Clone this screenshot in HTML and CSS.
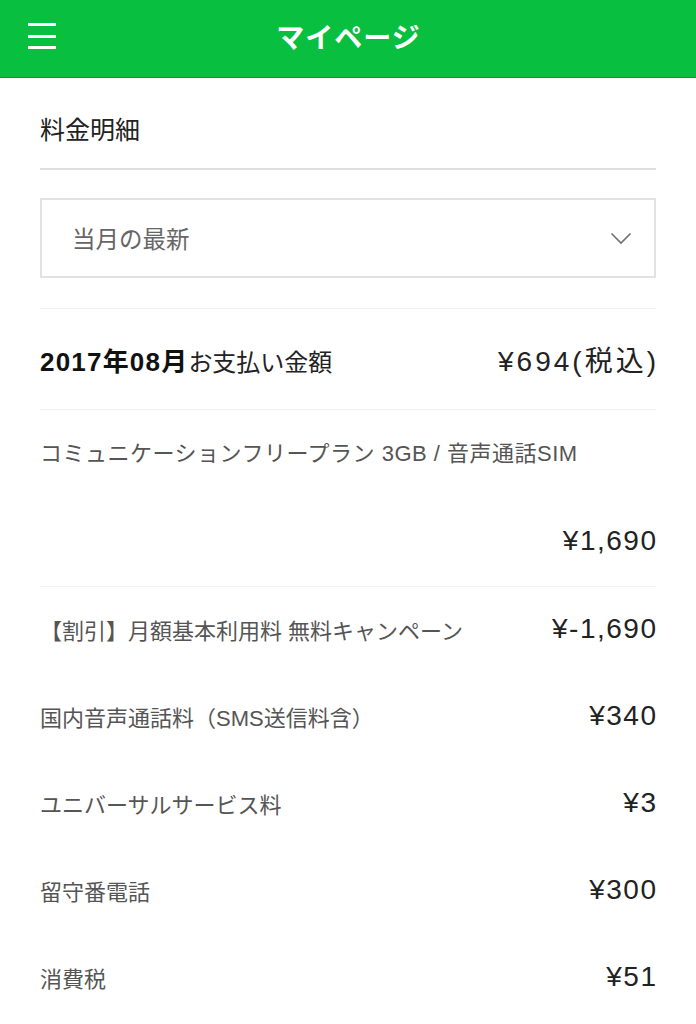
FILE: index.html
```html
<!DOCTYPE html>
<html lang="ja">
<head>
<meta charset="utf-8">
<title>マイページ</title>
<link rel="stylesheet" href="styles.css">
</head>
<body>
<header class="topbar">
  <div class="menu" aria-label="menu"><span></span><span></span><span></span></div>
  <h1 class="topbar-title">マイページ</h1>
  <div class="spacer"></div>
</header>
<main class="content">
  <h2 class="page-title">料金明細</h2>
  <div class="select">
    <span class="select-text">当月の最新</span>
    <svg class="chevron" width="22" height="13" viewBox="0 0 22 13"><polyline points="1.5,1.5 11,11 20.5,1.5" fill="none" stroke="#707070" stroke-width="1.6"/></svg>
  </div>
  <div class="total">
    <div class="total-label"><b>2017年08月</b><span>お支払い金額</span></div>
    <div class="total-amount">¥694(税込)</div>
  </div>
  <div class="plan">
    <div class="plan-name">コミュニケーションフリープラン 3GB / 音声通話SIM</div>
    <div class="amount plan-amount">¥1,690</div>
  </div>
  <ul class="items">
    <li class="item"><span class="label">【割引】月額基本利用料 無料キャンペーン</span><span class="amount">¥-1,690</span></li>
    <li class="item"><span class="label">国内音声通話料（SMS送信料含）</span><span class="amount">¥340</span></li>
    <li class="item"><span class="label">ユニバーサルサービス料</span><span class="amount">¥3</span></li>
    <li class="item"><span class="label">留守番電話</span><span class="amount">¥300</span></li>
    <li class="item"><span class="label">消費税</span><span class="amount">¥51</span></li>
  </ul>
</main>
</body>
</html>
```
FILE: styles.css
```css
* { box-sizing: border-box; }
html, body { margin: 0; padding: 0; background: #fff; }
body {
  font-family: "Liberation Sans", "Noto Sans CJK JP", sans-serif;
  color: #222;
}
.topbar {
  height: 78px;
  background: #08bf3f;
  border-bottom: 1px solid #079a35;
  display: grid;
  grid-template-columns: 1fr auto 1fr;
  align-items: center;
}
.menu {
  display: flex;
  flex-direction: column;
  gap: 8.5px;
  width: 28px;
  margin-left: 28px;
  margin-top: -5px;
}
.menu span { display: block; height: 3px; background: #fff; }
.topbar-title {
  margin: -6px 0 0;
  color: #fff;
  font-size: 28px;
  font-weight: bold;
  letter-spacing: 1px;
  padding-left: 1px;
}
.content { padding: 0 40px; }
.page-title {
  margin: 0;
  padding: 35px 0 20px;
  font-size: 25px;
  line-height: 35px;
  font-weight: normal;
  color: #222;
  border-bottom: 2px solid #dedede;
}
.select {
  margin-top: 28px;
  height: 80px;
  border: 2px solid #e2e2e2;
  display: flex;
  align-items: center;
  justify-content: space-between;
  padding: 0 22px 0 30px;
}
.select-text { font-size: 23.5px; color: #666; }
.total {
  margin-top: 30px;
  border-top: 1px solid #f0f0f0;
  border-bottom: 1px solid #f0f0f0;
  height: 102px;
  display: flex;
  align-items: center;
  justify-content: space-between;
}
.total-label b { font-size: 26px; font-weight: bold; letter-spacing: 1.2px; color: #111; }
.total-label span { font-size: 24px; color: #222; }
.total-amount { font-size: 28px; letter-spacing: 3px; margin-right: -3px; color: #222; }
.plan {
  padding: 29px 0 30px;
  border-bottom: 1px solid #f3f3f3;
  display: flex;
  flex-direction: column;
  gap: 57px;
}
.plan-name { font-size: 22px; line-height: 30px; color: #555; letter-spacing: 0.5px; }
.amount { font-size: 28px; letter-spacing: 1.5px; margin-right: -1.5px; color: #222; line-height: 30px; }
.plan-amount { text-align: right; }
.items { list-style: none; margin: -2px 0 0; padding: 0; }
.item {
  height: 87px;
  display: flex;
  align-items: center;
  justify-content: space-between;
}
.label { font-size: 22px; color: #555; }
```
